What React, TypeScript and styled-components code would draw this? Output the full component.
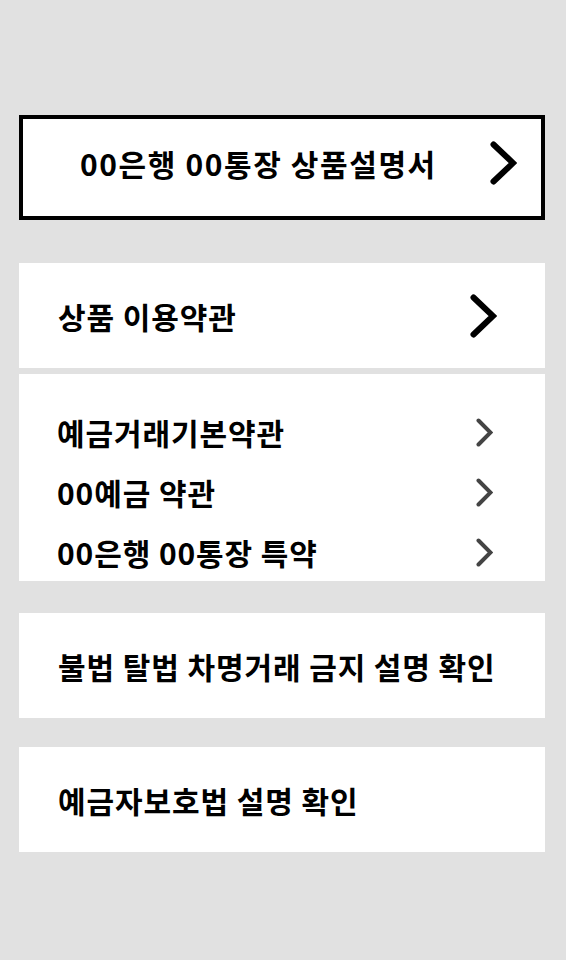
import React from "react";
import styled, { createGlobalStyle } from "styled-components";

const GlobalStyle = createGlobalStyle`
  html, body {
    margin: 0;
    padding: 0;
    background: #e1e1e1;
  }
  body {
    font-family: "Noto Sans CJK KR", "Noto Sans", sans-serif;
    color: #000;
  }
`;

const Page = styled.div`
  min-height: 960px;
  box-sizing: border-box;
  padding: 115px 21px 0 19px;
  display: flex;
  flex-direction: column;
`;

const Card = styled.div<{ $top?: number }>`
  margin-top: ${(p) => p.$top ?? 0}px;
  height: 105px;
  box-sizing: border-box;
  background: #fff;
  display: flex;
  align-items: center;
  justify-content: space-between;
  padding: 0 48px 0 39px;
`;

const MainCard = styled(Card)`
  border: 4px solid #000;
  padding: 0 24px 10px 57px;
`;

const ListCard = styled.div<{ $top?: number }>`
  margin-top: ${(p) => p.$top ?? 0}px;
  height: 207px;
  box-sizing: border-box;
  background: #fff;
  padding: 28px 52px 0 38px;
  overflow: hidden;
`;

const Row = styled.div`
  height: 60px;
  display: flex;
  align-items: center;
  justify-content: space-between;
`;

const Label = styled.span<{ $wide?: boolean }>`
  font-size: 30px;
  font-weight: 700;
  letter-spacing: ${(p) => (p.$wide ? 1.6 : 0.9)}px;
  white-space: nowrap;
`;

function Chevron({ small }: { small?: boolean }) {
  if (small) {
    return (
      <svg width="17" height="29" viewBox="0 0 17 29">
        <polyline
          points="2.5,2.5 14.5,14.5 2.5,26.5"
          fill="none"
          stroke="#444"
          strokeWidth="4"
          strokeLinecap="round"
          strokeLinejoin="miter"
        />
      </svg>
    );
  }
  return (
    <svg width="27" height="44" viewBox="0 0 27 44">
      <polyline
        points="3.5,3.5 23,22 3.5,40.5"
        fill="none"
        stroke="#000"
        strokeWidth="6"
        strokeLinecap="round"
        strokeLinejoin="miter"
      />
    </svg>
  );
}

const terms = ["예금거래기본약관", "00예금 약관", "00은행 00통장 특약"];

export default function App() {
  return (
    <>
      <GlobalStyle />
      <Page>
        <MainCard>
          <Label $wide>00은행 00통장 상품설명서</Label>
          <Chevron />
        </MainCard>

        <Card $top={43}>
          <Label>상품 이용약관</Label>
          <Chevron />
        </Card>

        <ListCard $top={6}>
          {terms.map((t) => (
            <Row key={t}>
              <Label>{t}</Label>
              <Chevron small />
            </Row>
          ))}
        </ListCard>

        <Card $top={32}>
          <Label>불법 탈법 차명거래 금지 설명 확인</Label>
        </Card>

        <Card $top={29}>
          <Label>예금자보호법 설명 확인</Label>
        </Card>
      </Page>
    </>
  );
}
